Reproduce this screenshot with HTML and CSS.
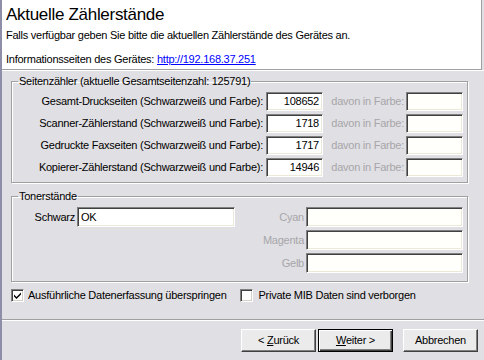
FILE: index.html
```html
<!DOCTYPE html>
<html lang="de">
<head>
<meta charset="utf-8">
<title>Aktuelle Zählerstände</title>
<link rel="stylesheet" href="styles.css">
</head>
<body>
<div class="dialog">
  <header class="head">
    <h1 class="title">Aktuelle Zählerstände</h1>
    <p class="intro">Falls verfügbar geben Sie bitte die aktuellen Zählerstände des Gerätes an.</p>
    <p class="info">Informationsseiten des Gerätes: <a class="link" href="#">http://192.168.37.251</a></p>
  </header>
  <main class="body">
    <fieldset class="group counters">
      <legend class="legend">Seitenzähler (aktuelle Gesamtseitenzahl: 125791)</legend>
      <div class="counter-grid">
        <span class="lbl">Gesamt-Druckseiten (Schwarzweiß und Farbe):</span>
        <span class="field num">108652</span>
        <span class="lbl dis">davon in Farbe:</span>
        <span class="field disabled"></span>

        <span class="lbl">Scanner-Zählerstand (Schwarzweiß und Farbe):</span>
        <span class="field num">1718</span>
        <span class="lbl dis">davon in Farbe:</span>
        <span class="field disabled"></span>

        <span class="lbl">Gedruckte Faxseiten (Schwarzweiß und Farbe):</span>
        <span class="field num">1717</span>
        <span class="lbl dis">davon in Farbe:</span>
        <span class="field disabled"></span>

        <span class="lbl">Kopierer-Zählerstand (Schwarzweiß und Farbe):</span>
        <span class="field num">14946</span>
        <span class="lbl dis">davon in Farbe:</span>
        <span class="field disabled"></span>
      </div>
    </fieldset>

    <fieldset class="group toner">
      <legend class="legend">Tonerstände</legend>
      <div class="toner-grid">
        <span class="lbl">Schwarz</span>
        <span class="field tall">OK</span>
        <span class="lbl dis">Cyan</span>
        <span class="field tall disabled"></span>

        <span class="lbl"></span>
        <span></span>
        <span class="lbl dis">Magenta</span>
        <span class="field tall disabled"></span>

        <span class="lbl"></span>
        <span></span>
        <span class="lbl dis">Gelb</span>
        <span class="field tall disabled"></span>
      </div>
    </fieldset>

    <div class="checks">
      <label class="check c1"><span class="box checked"><svg viewBox="0 0 9 9" width="9" height="9"><path d="M1 3.5 L3.5 6 L8 1.5 L8 3.5 L3.5 8 L1 5.5 Z" fill="#000"/></svg></span>Ausführliche Datenerfassung überspringen</label>
      <label class="check c2"><span class="box"></span>Private MIB Daten sind verborgen</label>
    </div>
  </main>
  <footer class="foot">
    <button class="btn" type="button">&lt; <u>Z</u>urück</button>
    <button class="btn default" type="button"><u>W</u>eiter &gt;</button>
    <button class="btn cancel" type="button">Abbrechen</button>
  </footer>
</div>
</body>
</html>
```

FILE: styles.css
```css
* { box-sizing: border-box; }
html, body { margin: 0; padding: 0; }
body {
  font-family: "Liberation Sans", Arial, sans-serif;
  font-size: 11px;
  line-height: 13px;
  letter-spacing: -0.25px;
  color: #000;
  background: #e0dfe3;
}
.dialog {
  width: 484px;
  height: 360px;
  border-left: 2px solid #8e8ea8;
  background: #e0dfe3;
  display: flex;
  flex-direction: column;
  overflow: hidden;
}
.head {
  height: 70px;
  background: #fff;
  border-bottom: 1px solid #a0a0a0;
  border-right: 1px solid #a0a0a0;
  margin-right: 2px;
  padding: 5px 0 0 4px;
}
.title {
  margin: 0;
  font-size: 17px;
  line-height: 20px;
  font-weight: normal;
  letter-spacing: -0.3px;
}
.intro {
  margin: 4px 0 0;
}
.info {
  margin: 11px 0 0;
}
.link { color: #0000ff; text-decoration: underline; }

.body {
  padding: 5px 16px 0 9px;
  box-shadow: inset 0 1px 0 #fff;
}
.group {
  margin: 0;
  border: 1px solid #a0a0a0;
  box-shadow: 1px 1px 0 #fff, inset 1px 1px 0 #fff;
  padding: 4px 4px 5px 2px;
  min-width: 0;
}
.legend {
  padding: 0 1px;
  margin-left: 4px;
  line-height: 13px;
}
.counter-grid {
  display: grid;
  grid-template-columns: 1fr 57px 83px 57px;
  grid-auto-rows: 19px;
  row-gap: 3px;
  align-items: center;
}
.lbl {
  text-align: right;
  padding-right: 3px;
  white-space: nowrap;
}
.counter-grid .lbl.dis { padding-right: 2px; }
.dis { color: #a7a6aa; }
.field {
  display: block;
  height: 19px;
  background: #fff;
  border-top: 1px solid #808080;
  border-left: 1px solid #808080;
  border-bottom: 1px solid #fff;
  border-right: 1px solid #fff;
  box-shadow: inset 1px 1px 0 #404040, inset -1px -1px 0 #ece9d8;
  padding: 2px 3px 0 3px;
  line-height: 13px;
}
.field.num { text-align: right; }
.field.disabled { background: #fffffc; }
.field.tall { height: 20px; padding-top: 3px; }

.toner {
  margin-top: 7px;
  padding-bottom: 8px;
}
.toner-grid {
  display: grid;
  grid-template-columns: 63px 158px 71px 157px;
  grid-auto-rows: 20px;
  row-gap: 3px;
  align-items: center;
}
.toner-grid .lbl { padding-right: 2px; }

.checks {
  display: flex;
  margin-top: 6px;
  height: 14px;
  align-items: center;
}
.check {
  display: flex;
  align-items: center;
  white-space: nowrap;
}
.c2 { margin-left: 13px; }
.box {
  width: 13px;
  height: 13px;
  flex: none;
  background: #fff;
  border-top: 1px solid #808080;
  border-left: 1px solid #808080;
  border-bottom: 1px solid #fff;
  border-right: 1px solid #fff;
  box-shadow: inset 1px 1px 0 #404040, inset -1px -1px 0 #d4d0c8;
  margin-right: 4px;
  display: flex;
  align-items: center;
  justify-content: center;
}
.c2 .box { margin-right: 6px; }

.foot {
  margin-top: auto;
  height: 41px;
  border-top: 1px solid #a0a0a0;
  box-shadow: inset 0 1px 0 #fff;
  display: flex;
  justify-content: flex-end;
  align-items: flex-start;
  padding: 9px 6px 0 0;
}
.btn {
  width: 75px;
  height: 23px;
  font: inherit;
  font-size: 11px;
  letter-spacing: -0.25px;
  color: #000;
  background: #ebebeb;
  border-top: 1px solid #fff;
  border-left: 1px solid #fff;
  border-bottom: 1px solid #404040;
  border-right: 1px solid #404040;
  box-shadow: inset -1px -1px 0 #808080;
  padding: 0;
  margin: 0;
}
.btn u { text-decoration: underline; }
.default {
  margin-left: 2px;
  border: 1px solid #000;
  box-shadow: inset 1px 1px 0 #fff, inset -1px -1px 0 #404040, inset -2px -2px 0 #808080;
}
.cancel { margin-left: 10px; }
```
